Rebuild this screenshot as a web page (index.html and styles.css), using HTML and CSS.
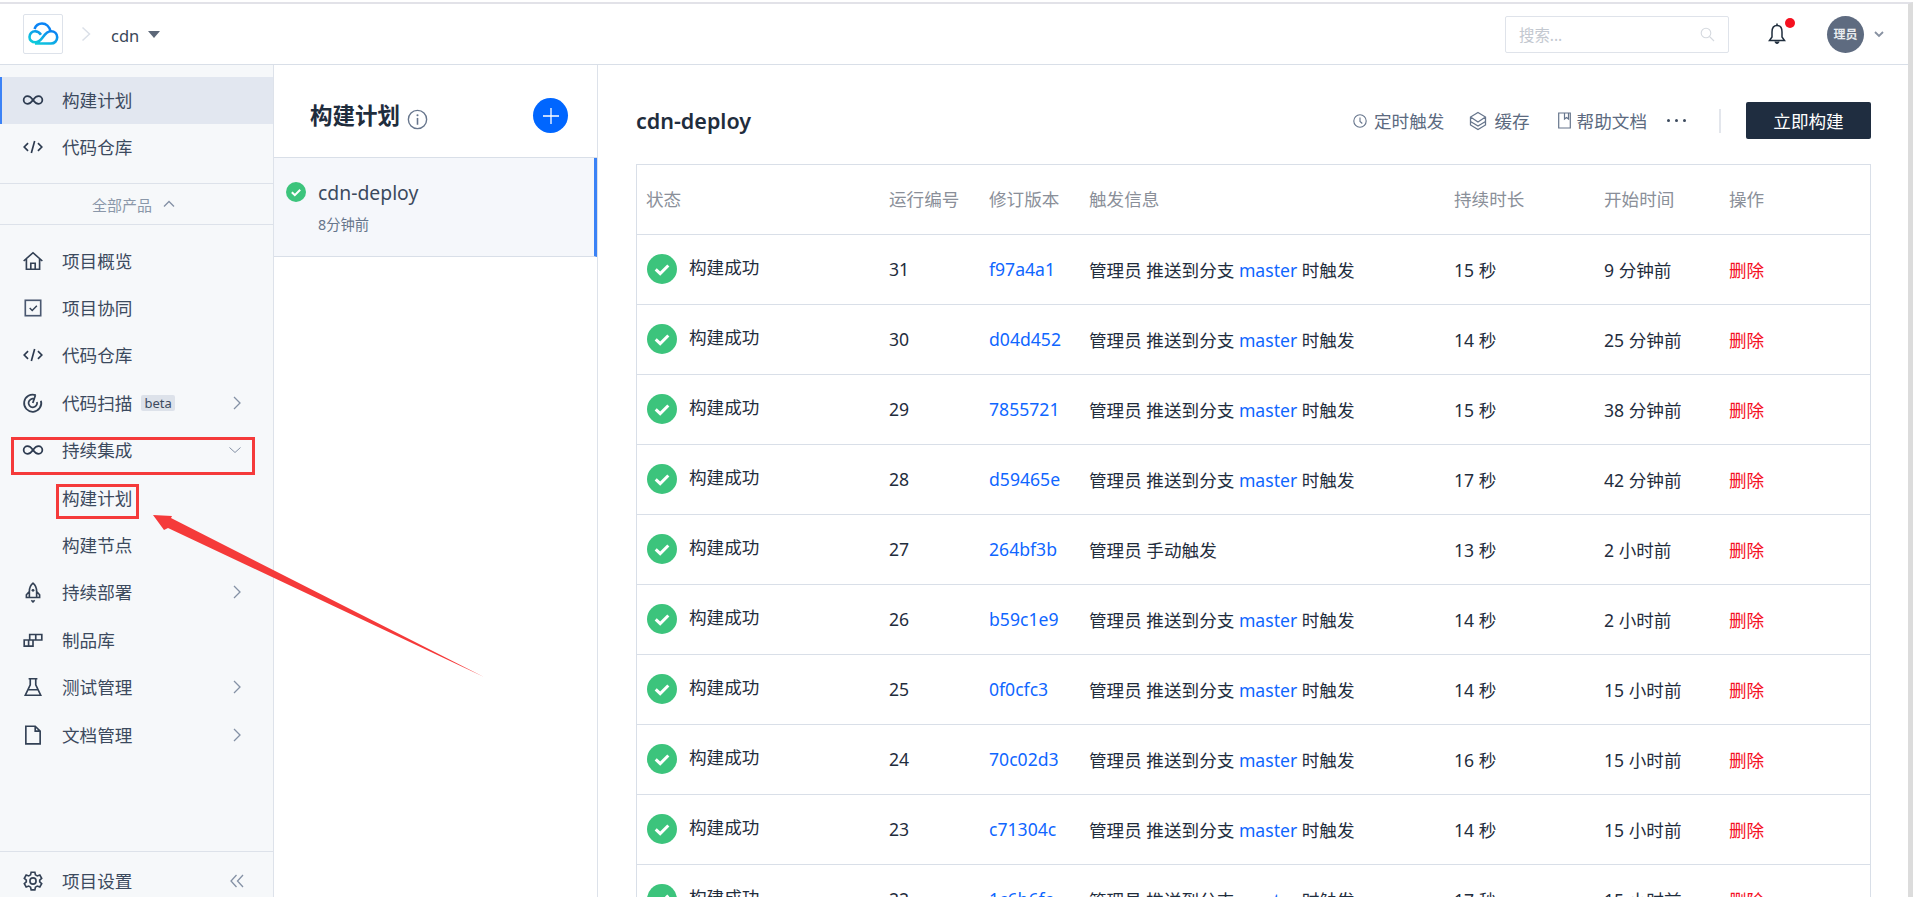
FILE: index.html
```html
<!DOCTYPE html>
<html lang="zh">
<head>
<meta charset="utf-8">
<title>构建计划</title>
<link rel="stylesheet" href="styles.css">
</head>
<body>
<div class="app">
  <header class="topbar">
    <div class="logo"><svg width="32" height="24" viewBox="0 0 32 24"><defs><linearGradient id="lg" x1="0" y1="1" x2="1" y2="0"><stop offset="0" stop-color="#10d5d8"/><stop offset="1" stop-color="#0a7cf5"/></linearGradient></defs><path d="M23.500 9.500C22.500 4.500 19 1.500 15 1.500 11.500 1.500 8.800 3.500 7.500 7" fill="none" stroke="#0a84f5" stroke-width="2.600"/><path d="M8 21.500h16c3.500 0 6.200-2.700 6.200-6.200S27.500 9.300 24 9.300c-4.500 0-6.500 3.700-9 7-2 2.700-4 4-6.800 4-3.400 0-5.700-2.300-5.700-5.400S5 9.300 8 9.300c2.700 0 4.500 1.200 6 3.400" fill="none" stroke="url(#lg)" stroke-width="2.600"/></svg></div>
    <svg class="crumb" width="10" height="16" viewBox="0 0 10 16"><path d="M1.500 1.500 8.500 8l-7 6.500" fill="none" stroke="#dbe0e8" stroke-width="1.500"/></svg>
    <span class="project">cdn</span>
    <span class="caret"></span>
    <div class="spacer"></div>
    <div class="search"><span>搜索...</span><svg width="15" height="15" viewBox="0 0 15 15"><circle cx="6" cy="6" r="4.800" fill="none" stroke="#d5d9df" stroke-width="1.100"/><path d="m9.500 9.500 4.500 4.500" stroke="#d5d9df" stroke-width="1.100"/></svg></div>
    <div class="bell"><svg width="18" height="22" viewBox="0 0 18 22"><path d="M9 2.500C5.500 2.500 4 5.500 4 9v5l-2.500 3.500h15L14 14V9c0-3.500-1.500-6.500-5-6.500Z" fill="none" stroke="#1f2d3d" stroke-width="1.500"/><path d="M7 18.500a2 2 0 0 0 4 0" fill="#1f2d3d" stroke="#1f2d3d"/><path d="M9 .5v2" stroke="#1f2d3d" stroke-width="1.500"/></svg><i class="dot"></i></div>
    <div class="avatar">理员</div>
    <svg class="userchev" width="10" height="8" viewBox="0 0 10 8"><path d="m1 2 4 4 4-4" fill="none" stroke="#8791a1" stroke-width="1.800"/></svg>
  </header>
  <div class="body">
    <aside class="sidebar">
      <div class="top-nav">
        <a class="item active"><svg class="ic" viewBox="0 0 20 20"><use href="#inf"/></svg><span>构建计划</span></a>
        <a class="item"><svg class="ic" viewBox="0 0 20 20"><use href="#code"/></svg><span>代码仓库</span></a>
      </div>
      <div class="allprod">全部产品<svg width="12" height="8" viewBox="0 0 12 8"><path d="m1 6.500 5-5 5 5" fill="none" stroke="#8491a5" stroke-width="1.300"/></svg></div>
      <nav class="main-nav">
        <a class="item"><svg class="ic" viewBox="0 0 20 20"><path d="M1.500 10 10 2.500l8.500 7.500M4 8v9.500h12V8M8 17.500V12h4v5.500" fill="none" stroke="#334155" stroke-width="1.500"/></svg><span>项目概览</span></a>
        <a class="item"><svg class="ic" viewBox="0 0 20 20"><rect x="3" y="3" width="14" height="14" fill="none" stroke="#4a5870" stroke-width="1.500"/><path d="m7 10 2.300 2.300L13.500 8" fill="none" stroke="#334155" stroke-width="1.300"/></svg><span>项目协同</span></a>
        <a class="item"><svg class="ic" viewBox="0 0 20 20"><use href="#code"/></svg><span>代码仓库</span></a>
        <a class="item"><svg class="ic" viewBox="0 0 20 20"><path d="M12.500 2.900A7.800 7.800 0 1 0 17.200 8M11.500 6.500A3.900 3.900 0 1 0 13.600 9" fill="none" stroke="#334155" stroke-width="1.600"/><path d="m9.800 10 2.400-7" stroke="#334155" stroke-width="1.600"/></svg><span>代码扫描</span><em class="beta">beta</em><svg class="chev" viewBox="0 0 8 14"><path d="m1 1 6 6-6 6" fill="none" stroke="#8491a5" stroke-width="1.300"/></svg></a>
        <a class="item"><svg class="ic" viewBox="0 0 20 20"><use href="#inf"/></svg><span>持续集成</span><svg class="chev down" viewBox="0 0 12 6"><path d="m.5.500 5.500 5 5.500-5" fill="none" stroke="#8491a5" stroke-width="1"/></svg></a>
        <a class="item sub"><span>构建计划</span></a>
        <a class="item sub"><span>构建节点</span></a>
        <a class="item"><svg class="ic" viewBox="0 0 20 20"><path d="M10 2c2.500 2 3.300 4.500 3.300 7.500V15H6.700V9.500C6.700 6.500 7.500 4 10 2ZM6.700 9.500 4 12.500V15h2.700M13.300 9.500l2.700 3V15h-2.700M8.500 17.500 10 19l1.500-1.500" fill="none" stroke="#334155" stroke-width="1.500"/><circle cx="10" cy="8.500" r="1.300" fill="#334155"/></svg><span>持续部署</span><svg class="chev" viewBox="0 0 8 14"><path d="m1 1 6 6-6 6" fill="none" stroke="#8491a5" stroke-width="1.300"/></svg></a>
        <a class="item"><svg class="ic" viewBox="0 0 20 20"><path d="M2 10h8v5.500H2zM7 10V5h11v5H10M12.500 5v5M6 10v5.500" fill="none" stroke="#334155" stroke-width="1.500"/></svg><span>制品库</span></a>
        <a class="item"><svg class="ic" viewBox="0 0 20 20"><path d="M6 2.500h8M7.500 2.500V8L3 17.500h14L12.500 8V2.500M5.500 12.500h9" fill="none" stroke="#334155" stroke-width="1.500"/></svg><span>测试管理</span><svg class="chev" viewBox="0 0 8 14"><path d="m1 1 6 6-6 6" fill="none" stroke="#8491a5" stroke-width="1.300"/></svg></a>
        <a class="item"><svg class="ic" viewBox="0 0 20 20"><path d="M3.500 2h8.500l4.500 4.500V18h-13zM12 2v4.500h4.500" fill="none" stroke="#334155" stroke-width="1.500"/></svg><span>文档管理</span><svg class="chev" viewBox="0 0 8 14"><path d="m1 1 6 6-6 6" fill="none" stroke="#8491a5" stroke-width="1.300"/></svg></a>
      </nav>
      <div class="settings">
        <a class="item"><svg class="ic" viewBox="0 0 20 20"><path d="m8.300 2h3.400l.5 2.400 1.700 1 2.300-.8 1.700 3-1.800 1.600v1.600l1.800 1.600-1.700 3-2.300-.8-1.700 1-.5 2.400H8.300l-.5-2.400-1.700-1-2.300.8-1.700-3 1.800-1.600V9.200L2.100 7.600l1.700-3 2.300.8 1.700-1z" fill="none" stroke="#334155" stroke-width="1.500"/><circle cx="10" cy="10" r="2.800" fill="none" stroke="#334155" stroke-width="1.500"/></svg><span>项目设置</span><svg class="chev double" viewBox="0 0 14 14"><path d="M6.500 1 1 7l5.500 6M13 1 7.500 7l5.500 6" fill="none" stroke="#8491a5" stroke-width="1.300"/></svg></a>
      </div>
    </aside>
    <section class="plans">
      <div class="plans-head">
        <h2>构建计划</h2>
        <svg class="info" width="21" height="21" viewBox="0 0 20 20"><circle cx="10" cy="10" r="8.700" fill="none" stroke="#66758c" stroke-width="1.300"/><circle cx="10" cy="6" r="1" fill="#66758c"/><path d="M10 8.500V15" stroke="#66758c" stroke-width="1.500"/></svg>
        <button class="add"><svg width="16" height="16" viewBox="0 0 16 16"><path d="M8 0v16M0 8h16" stroke="#fff" stroke-width="1.300"/></svg></button>
      </div>
      <div class="plan">
        <svg class="ok-s" viewBox="0 0 20 20"><use href="#ok"/></svg>
        <div><div class="plan-name">cdn-deploy</div><div class="plan-time">8分钟前</div></div>
      </div>
    </section>
    <main class="content">
      <div class="content-head">
        <h1>cdn-deploy</h1>
        <div class="tools">
          <a class="tool"><svg width="14" height="16" viewBox="0 0 14 16"><circle cx="7" cy="8" r="6.200" fill="none" stroke="#66758c" stroke-width="1.100"/><path d="M7 4.500V8.500l2.300 2" fill="none" stroke="#66758c" stroke-width="1.100"/></svg>定时触发</a>
          <a class="tool"><svg width="18" height="20" viewBox="0 0 18 20"><path d="M9 1.500 16.500 6v8L9 18.500 1.500 14V6zM1.500 6 9 11l7.500-5M1.500 10.500 9 15l7.500-4.500" fill="none" stroke="#66758c" stroke-width="1.300"/></svg>缓存</a>
          <a class="tool help"><svg width="13" height="17" viewBox="0 0 13 17"><path d="M.7 1h11.600v15H.7zM6.500 1v6l2-1.500 2 1.500V1" fill="none" stroke="#66758c" stroke-width="1.200"/></svg>帮助文档</a>
          <span class="more"><i></i><i></i><i></i></span>
        </div>
        <span class="vline"></span>
        <button class="build">立即构建</button>
      </div>
      <div class="table-wrap">
      <table>
        <thead><tr><th class="c1">状态</th><th class="c2">运行编号</th><th class="c3">修订版本</th><th class="c4">触发信息</th><th class="c5">持续时长</th><th class="c6">开始时间</th><th class="c7">操作</th></tr></thead>
        <tbody>
          <tr><td><span class="st"><svg viewBox="0 0 20 20"><use href="#ok"/></svg><span class="st-t">构建成功</span></span></td><td>31</td><td><a>f97a4a1</a></td><td>管理员 推送到分支 <a>master</a> 时触发</td><td>15 秒</td><td>9 分钟前</td><td><a class="del">删除</a></td></tr>
          <tr><td><span class="st"><svg viewBox="0 0 20 20"><use href="#ok"/></svg><span class="st-t">构建成功</span></span></td><td>30</td><td><a>d04d452</a></td><td>管理员 推送到分支 <a>master</a> 时触发</td><td>14 秒</td><td>25 分钟前</td><td><a class="del">删除</a></td></tr>
          <tr><td><span class="st"><svg viewBox="0 0 20 20"><use href="#ok"/></svg><span class="st-t">构建成功</span></span></td><td>29</td><td><a>7855721</a></td><td>管理员 推送到分支 <a>master</a> 时触发</td><td>15 秒</td><td>38 分钟前</td><td><a class="del">删除</a></td></tr>
          <tr><td><span class="st"><svg viewBox="0 0 20 20"><use href="#ok"/></svg><span class="st-t">构建成功</span></span></td><td>28</td><td><a>d59465e</a></td><td>管理员 推送到分支 <a>master</a> 时触发</td><td>17 秒</td><td>42 分钟前</td><td><a class="del">删除</a></td></tr>
          <tr><td><span class="st"><svg viewBox="0 0 20 20"><use href="#ok"/></svg><span class="st-t">构建成功</span></span></td><td>27</td><td><a>264bf3b</a></td><td>管理员 手动触发</td><td>13 秒</td><td>2 小时前</td><td><a class="del">删除</a></td></tr>
          <tr><td><span class="st"><svg viewBox="0 0 20 20"><use href="#ok"/></svg><span class="st-t">构建成功</span></span></td><td>26</td><td><a>b59c1e9</a></td><td>管理员 推送到分支 <a>master</a> 时触发</td><td>14 秒</td><td>2 小时前</td><td><a class="del">删除</a></td></tr>
          <tr><td><span class="st"><svg viewBox="0 0 20 20"><use href="#ok"/></svg><span class="st-t">构建成功</span></span></td><td>25</td><td><a>0f0cfc3</a></td><td>管理员 推送到分支 <a>master</a> 时触发</td><td>14 秒</td><td>15 小时前</td><td><a class="del">删除</a></td></tr>
          <tr><td><span class="st"><svg viewBox="0 0 20 20"><use href="#ok"/></svg><span class="st-t">构建成功</span></span></td><td>24</td><td><a>70c02d3</a></td><td>管理员 推送到分支 <a>master</a> 时触发</td><td>16 秒</td><td>15 小时前</td><td><a class="del">删除</a></td></tr>
          <tr><td><span class="st"><svg viewBox="0 0 20 20"><use href="#ok"/></svg><span class="st-t">构建成功</span></span></td><td>23</td><td><a>c71304c</a></td><td>管理员 推送到分支 <a>master</a> 时触发</td><td>14 秒</td><td>15 小时前</td><td><a class="del">删除</a></td></tr>
          <tr><td><span class="st"><svg viewBox="0 0 20 20"><use href="#ok"/></svg><span class="st-t">构建成功</span></span></td><td>22</td><td><a>1c6b6fc</a></td><td>管理员 推送到分支 <a>master</a> 时触发</td><td>17 秒</td><td>15 小时前</td><td><a class="del">删除</a></td></tr>
        </tbody>
      </table>
      </div>
    </main>
  </div>
</div>
<svg class="annot" width="1913" height="897" viewBox="0 0 1913 897">
  <rect x="12.500" y="438.500" width="241" height="35" fill="none" stroke="#f53a3a" stroke-width="3"/>
  <rect x="57.500" y="485.500" width="80" height="32" fill="none" stroke="#f53a3a" stroke-width="3"/>
  <polygon points="153,515 172,516 171,518 484,677 168,528 164,530" fill="#f53a3a"/>
</svg>
<svg class="defs" width="0" height="0">
  <symbol id="inf" viewBox="0 0 20 20"><path d="M10 10C8.500 7.800 7 6.500 5 6.500a3.500 3.500 0 0 0 0 7c2 0 3.500-1.300 5-3.500 1.500-2.200 3-3.500 5-3.500a3.500 3.500 0 0 1 0 7c-2 0-3.500-1.300-5-3.500Z" fill="none" stroke="#2c3a4f" stroke-width="1.600"/></symbol>
  <symbol id="code" viewBox="0 0 20 20"><path d="M5.500 6.500 2 10l3.500 3.500M14.500 6.500 18 10l-3.500 3.500M11.500 4.500 8.500 15.500" fill="none" stroke="#2c3a4f" stroke-width="1.500"/></symbol>
  <symbol id="ok" viewBox="0 0 20 20"><circle cx="10" cy="10" r="10" fill="#3cc47c"/><path d="m5.800 10.300 3 2.800 5.400-5.400" fill="none" stroke="#fff" stroke-width="2"/></symbol>
</svg>
</body>
</html>
```
FILE: styles.css
```css
* { box-sizing: border-box; }
html, body { margin: 0; height: 100%; overflow: hidden; background: #fff; }
body { font-family: "Noto Sans", "Noto Sans CJK SC", sans-serif; font-size: 17.6px; color: #1f2d3d; position: relative; }
a { text-decoration: none; color: inherit; }
.app { height: 895px; margin-top: 2px; display: flex; flex-direction: column; border-top: 2px solid #e2e2e8; border-right: 5px solid #dcdcdc; }
.topbar { height: 61px; flex: none; display: flex; align-items: center; border-bottom: 1px solid #d9dfe8; padding-left: 23px; padding-right: 24px; }
.logo { width: 40px; height: 40px; border: 1px solid #dde2ea; border-radius: 2px; display: flex; align-items: center; justify-content: center; }
.crumb { margin-left: 18px; }
.project { margin-left: 20px; padding-top: 2px; font-size: 16.500px; color: #3a4658; }
.caret { margin-left: 9px; width: 0; height: 0; border-left: 6.500px solid transparent; border-right: 6.500px solid transparent; border-top: 7px solid #5c6778; }
.spacer { flex: 1; }
.search { width: 224px; height: 37px; border: 1px solid #dfe3ea; border-radius: 2px; display: flex; align-items: center; justify-content: space-between; padding: 0 13px; font-size: 15.400px; color: #c3c8d0; }
.bell { position: relative; width: 18px; height: 22px; margin-left: 39px; }
.dot { position: absolute; top: -5px; left: 17px; width: 10px; height: 10px; border-radius: 50%; background: #f5101f; }
.avatar { margin-left: 41px; width: 37px; height: 37px; border-radius: 50%; background: #5e6b80; color: #e8ebef; font-size: 12px; font-weight: 700; display: flex; align-items: center; justify-content: center; }
.userchev { margin-left: 10px; }
.body { flex: 1; display: flex; min-height: 0; }
.sidebar { width: 274px; flex: none; background: #f6f8fa; border-right: 1px solid #dde2ea; display: flex; flex-direction: column; }
.item { height: 47.400px; display: flex; align-items: center; color: #3c4a5e; padding: 0 32px 2px 22px; line-height: 24px; }
.ic { width: 22px; height: 22px; margin-right: 18px; flex: none; }
.top-nav { padding: 12px 0; border-bottom: 1px solid #dde2ea; }
.top-nav .item { height: 47px; }
.item.active { background: #e2e7f0; border-left: 2px solid #3b82f6; padding-left: 20px; }
.allprod { height: 41px; flex: none; padding-right: 6px; border-bottom: 1px solid #dde2ea; display: flex; align-items: center; justify-content: center; gap: 11px; font-size: 15px; color: #8a97a9; }
.main-nav { flex: 1; padding-top: 13px; }
.sub { padding-left: 62px; }
.beta { margin-left: 9px; padding: 0 3px; height: 16px; line-height: 16px; background: #dde2ea; border-radius: 2px; font-style: normal; font-size: 13px; color: #3c4a5e; }
.chev { width: 8px; height: 14px; margin-left: auto; flex: none; }
.chev.down { width: 12px; height: 6px; }
.chev.double { width: 14px; height: 14px; margin-right: -3px; }
.settings { height: 46px; flex: none; border-top: 1px solid #dde2ea; overflow: hidden; }
.settings .item { height: 60px; }
.plans { width: 324px; flex: none; border-right: 1px solid #dde2ea; }
.plans-head { height: 93px; display: flex; align-items: center; padding: 9px 29px 0 36px; border-bottom: 1px solid #d9dfe8; }
.plans-head h2 { margin: 0; font-size: 22.500px; line-height: 30px; font-weight: 700; color: #1f2d3d; }
.info { margin-left: 7px; margin-top: 8px; }
.add { margin-left: auto; width: 35px; height: 35px; border: 0; border-radius: 50%; background: #0066ff; padding: 0; display: flex; align-items: center; justify-content: center; }
.plan { height: 99px; background: #f5f7fb; border-bottom: 1px solid #d9dfe8; border-right: 3px solid #3b82f6; display: flex; padding: 25px 12px; gap: 12px; }
.ok-s { width: 20px; height: 20px; flex: none; margin-top: -1px; }
.plan-name { font-size: 19.360px; line-height: 24px; color: #3c4a5e; margin-top: -2px; }
.plan-time { font-size: 14.300px; color: #66758c; margin-top: 11px; line-height: 18px; }
.content { flex: 1; min-width: 0; padding: 0 37px 0 38px; overflow: hidden; }
.content-head { height: 99px; display: flex; align-items: center; padding-top: 12px; }
.content-head h1 { margin: 0; font-size: 21.500px; line-height: 30px; font-weight: 600; color: #1f2d3d; }
.tools { margin-left: auto; display: flex; align-items: center; gap: 25px; color: #5c6a80; }
.tool { display: flex; align-items: center; gap: 7px; }
.help { margin-left: 3px; gap: 6px; }
.more { display: flex; gap: 5px; margin-left: -5px; }
.more i { width: 3px; height: 3px; border-radius: 50%; background: #3c4a5e; }
.vline { width: 2px; height: 24px; background: #e3e6ec; margin: 0 25px 0 33px; }
.build { width: 125px; height: 37px; border: 0; border-radius: 2px; background: #1f2d40; color: #fff; font-size: 17.600px; font-family: inherit; padding: 0; }
.table-wrap { border: 1px solid #d9dfe8; border-bottom: 0; }
table { width: 100%; border-collapse: collapse; table-layout: fixed; font-size: 17.600px; }
th { height: 69px; text-align: left; font-weight: 400; color: #8a8f99; padding: 0 0 2px 10px; }
td { height: 70px; border-top: 1px solid #d9dfe8; padding: 0 0 0 9px; color: #1f2d3d; }
th { padding-left: 9px; }
td a { color: #0f66ff; }
td a.del { color: #f5101f; }
.c1 { width: 243px; } .c2 { width: 100px; } .c3 { width: 100px; } .c4 { width: 365px; } .c5 { width: 150px; } .c6 { width: 125px; }
.st { display: flex; align-items: center; gap: 12px; }
.st svg { width: 30px; height: 30px; flex: none; margin-left: 1px; }
.st-t { margin-bottom: 6px; }
.annot { position: absolute; left: 0; top: 0; pointer-events: none; }
.defs { position: absolute; }
```
